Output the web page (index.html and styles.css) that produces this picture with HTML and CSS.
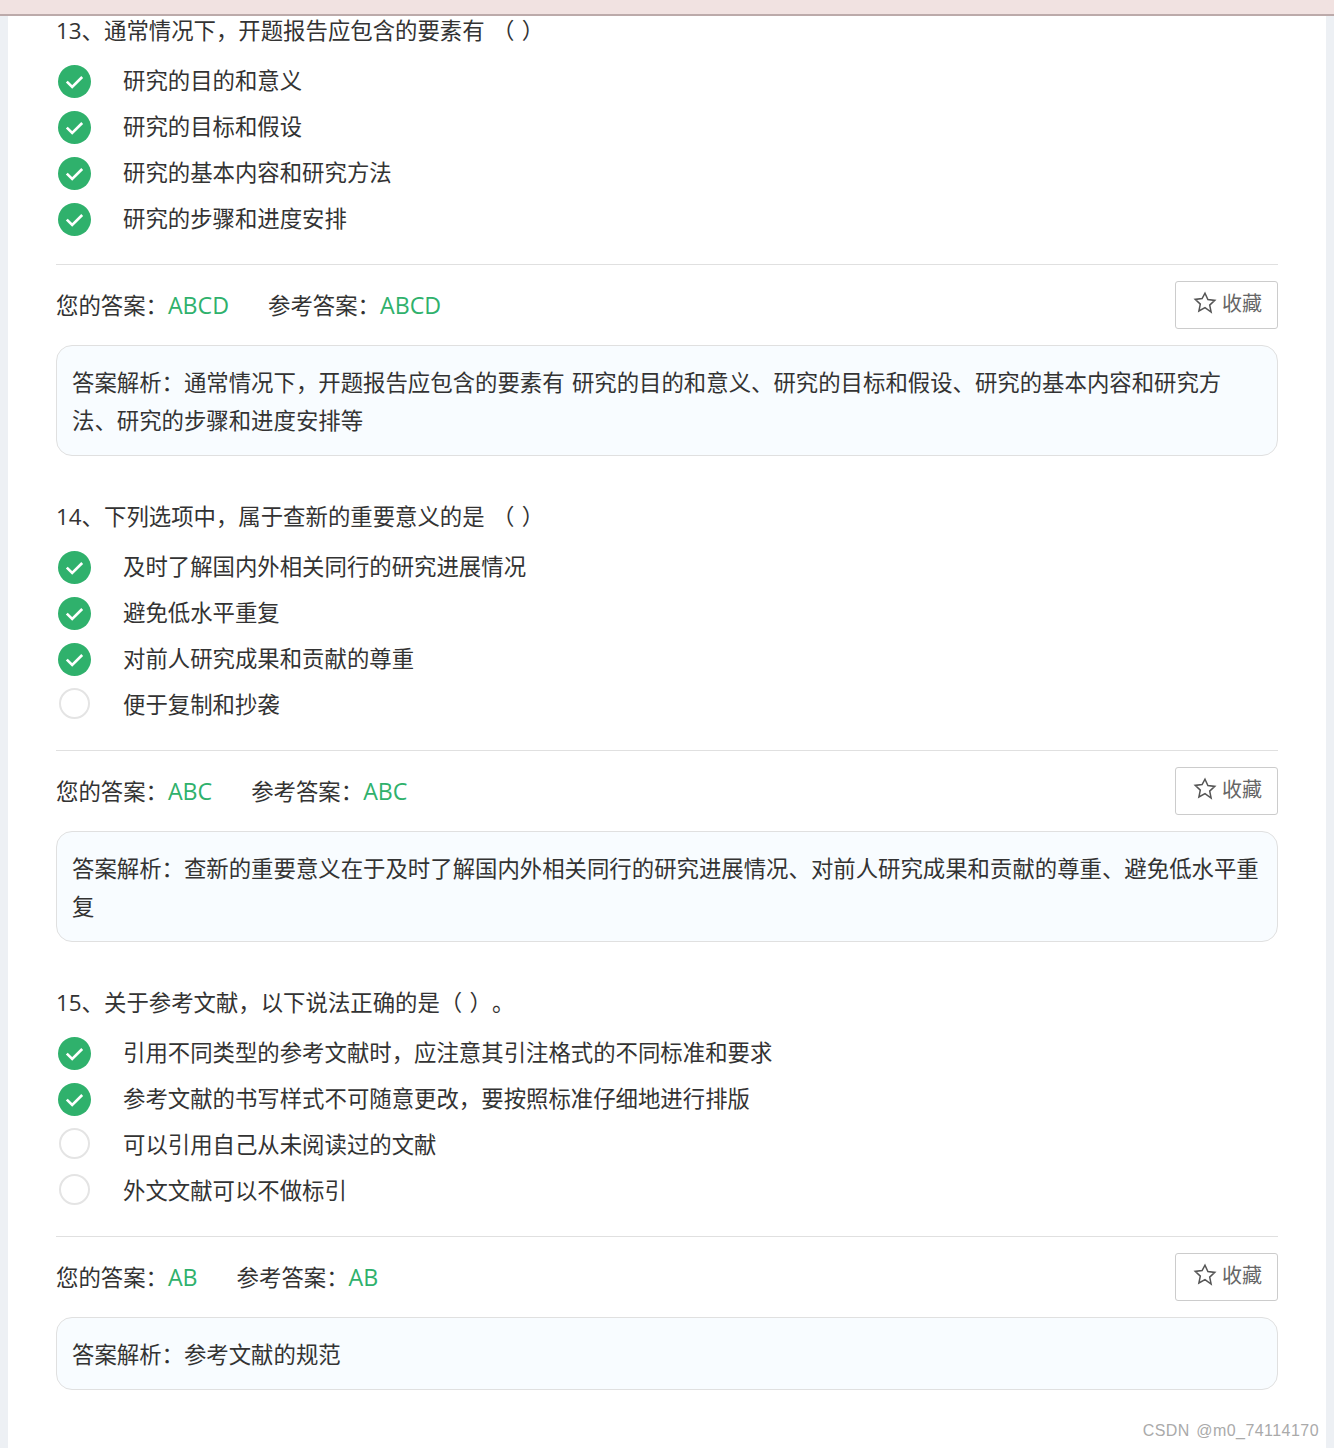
FILE: index.html
```html
<!DOCTYPE html>
<html lang="zh-CN">
<head>
<meta charset="utf-8">
<title>题目解析</title>
<link rel="stylesheet" href="styles.css">
</head>
<body>
<svg width="0" height="0" class="defs">
  <symbol id="check" viewBox="0 0 33 33"><circle cx="16.5" cy="16.5" r="16.5" fill="#2fb16c"/><path d="M8.8 16.6l5.4 5.4 10-10" fill="none" stroke="#fff" stroke-width="2.6"/></symbol>
  <symbol id="star" viewBox="0 0 24 24"><path d="M12 2.2l2.9 6.4 6.9.8-5.1 4.7 1.4 6.9L12 16.6l-6.1 3.4 1.4-6.9-5.1-4.7 6.9-.8z" fill="none" stroke="#555" stroke-width="1.5" stroke-linejoin="miter"/></symbol>
</svg>
<header class="topbar"></header>
<main class="card">

  <section class="question">
    <h3 class="title">13、通常情况下，开题报告应包含的要素有 （ ）</h3>
    <ul class="options">
      <li class="option"><svg class="mark"><use href="#check"/></svg><span>研究的目的和意义</span></li>
      <li class="option"><svg class="mark"><use href="#check"/></svg><span>研究的目标和假设</span></li>
      <li class="option"><svg class="mark"><use href="#check"/></svg><span>研究的基本内容和研究方法</span></li>
      <li class="option"><svg class="mark"><use href="#check"/></svg><span>研究的步骤和进度安排</span></li>
    </ul>
    <div class="result">
      <p class="answers"><span class="pair">您的答案：<b class="val">ABCD</b></span><span class="pair">参考答案：<b class="val">ABCD</b></span></p>
      <button class="fav"><svg class="star"><use href="#star"/></svg><span class="fav-label">收藏</span></button>
    </div>
    <div class="analysis">答案解析：通常情况下，开题报告应包含的要素有 研究的目的和意义、研究的目标和假设、研究的基本内容和研究方法、研究的步骤和进度安排等</div>
  </section>

  <section class="question">
    <h3 class="title">14、下列选项中，属于查新的重要意义的是 （ ）</h3>
    <ul class="options">
      <li class="option"><svg class="mark"><use href="#check"/></svg><span>及时了解国内外相关同行的研究进展情况</span></li>
      <li class="option"><svg class="mark"><use href="#check"/></svg><span>避免低水平重复</span></li>
      <li class="option"><svg class="mark"><use href="#check"/></svg><span>对前人研究成果和贡献的尊重</span></li>
      <li class="option"><i class="empty"></i><span>便于复制和抄袭</span></li>
    </ul>
    <div class="result">
      <p class="answers"><span class="pair">您的答案：<b class="val">ABC</b></span><span class="pair">参考答案：<b class="val">ABC</b></span></p>
      <button class="fav"><svg class="star"><use href="#star"/></svg><span class="fav-label">收藏</span></button>
    </div>
    <div class="analysis">答案解析：查新的重要意义在于及时了解国内外相关同行的研究进展情况、对前人研究成果和贡献的尊重、避免低水平重复</div>
  </section>

  <section class="question">
    <h3 class="title">15、关于参考文献，以下说法正确的是（ ）。</h3>
    <ul class="options">
      <li class="option"><svg class="mark"><use href="#check"/></svg><span>引用不同类型的参考文献时，应注意其引注格式的不同标准和要求</span></li>
      <li class="option"><svg class="mark"><use href="#check"/></svg><span>参考文献的书写样式不可随意更改，要按照标准仔细地进行排版</span></li>
      <li class="option"><i class="empty"></i><span>可以引用自己从未阅读过的文献</span></li>
      <li class="option"><i class="empty"></i><span>外文文献可以不做标引</span></li>
    </ul>
    <div class="result">
      <p class="answers"><span class="pair">您的答案：<b class="val">AB</b></span><span class="pair">参考答案：<b class="val">AB</b></span></p>
      <button class="fav"><svg class="star"><use href="#star"/></svg><span class="fav-label">收藏</span></button>
    </div>
    <div class="analysis">答案解析：参考文献的规范</div>
  </section>

</main>
<div class="watermark">CSDN @m0_74114170</div>
</body>
</html>
```

FILE: styles.css
```css
* { box-sizing: border-box; }
html, body { height: 1448px; overflow: hidden; }
body {
  margin: 0;
  position: relative;
  background: #edf0f4;
  color: #333;
  font-family: "Open Sans", "Noto Sans CJK SC", sans-serif;
  font-size: 22.4px;
  word-spacing: 1.5px;
  text-spacing-trim: space-all;
}
.defs { position: absolute; }
.topbar {
  height: 16px;
  background: #f1e2e1;
  border-bottom: 2px solid #bcaaaa;
}
.card {
  margin: 0 8px;
  height: 1432px;
  padding: 0 48px;
  background: #fff;
}
.question { margin-bottom: 46px; }
.title {
  margin: 0;
  height: 30px;
  font-size: 22.4px;
  line-height: 30px;
  font-weight: 400;
}
.options {
  list-style: none;
  margin: 12px 0 22px;
  padding: 0;
}
.option {
  display: flex;
  align-items: center;
  height: 46px;
}
.mark {
  flex: none;
  width: 33px;
  height: 33px;
  margin: 0 0 0 2px;
}
.empty {
  flex: none;
  width: 31px;
  height: 31px;
  margin: -3px 1px 0 3px;
  border: 2px solid #e4e4e4;
  border-radius: 50%;
}
.option span { margin: 0 0 4px 32px; }
.result {
  display: flex;
  justify-content: space-between;
  align-items: center;
  border-top: 1px solid #e0e0e0;
  padding-top: 16px;
}
.answers {
  margin: 0 0 2px;
  display: flex;
  gap: 39px;
}
.val { font-weight: 400; font-size: 23.2px; color: #2fb16c; }
.fav {
  display: flex;
  align-items: center;
  justify-content: center;
  gap: 5px;
  width: 103px;
  height: 48px;
  padding: 0 0 4px 2px;
  background: #fff;
  border: 1px solid #ccc;
  border-radius: 3px;
  color: #666;
  font: 400 20px "Noto Sans CJK SC", sans-serif;
}
.fav-label { margin-bottom: 2px; }
.star { width: 24px; height: 24px; }
.analysis {
  margin-top: 16px;
  padding: 17.5px 15px 15.5px;
  background: #f8fcff;
  border: 1px solid #e0e0e0;
  border-radius: 16px;
  line-height: 38px;
}
.watermark {
  position: absolute;
  right: 15px;
  top: 1422px;
  color: #aaa;
  font: 16px/18px "Liberation Sans", sans-serif;
  letter-spacing: .45px;
}
```
